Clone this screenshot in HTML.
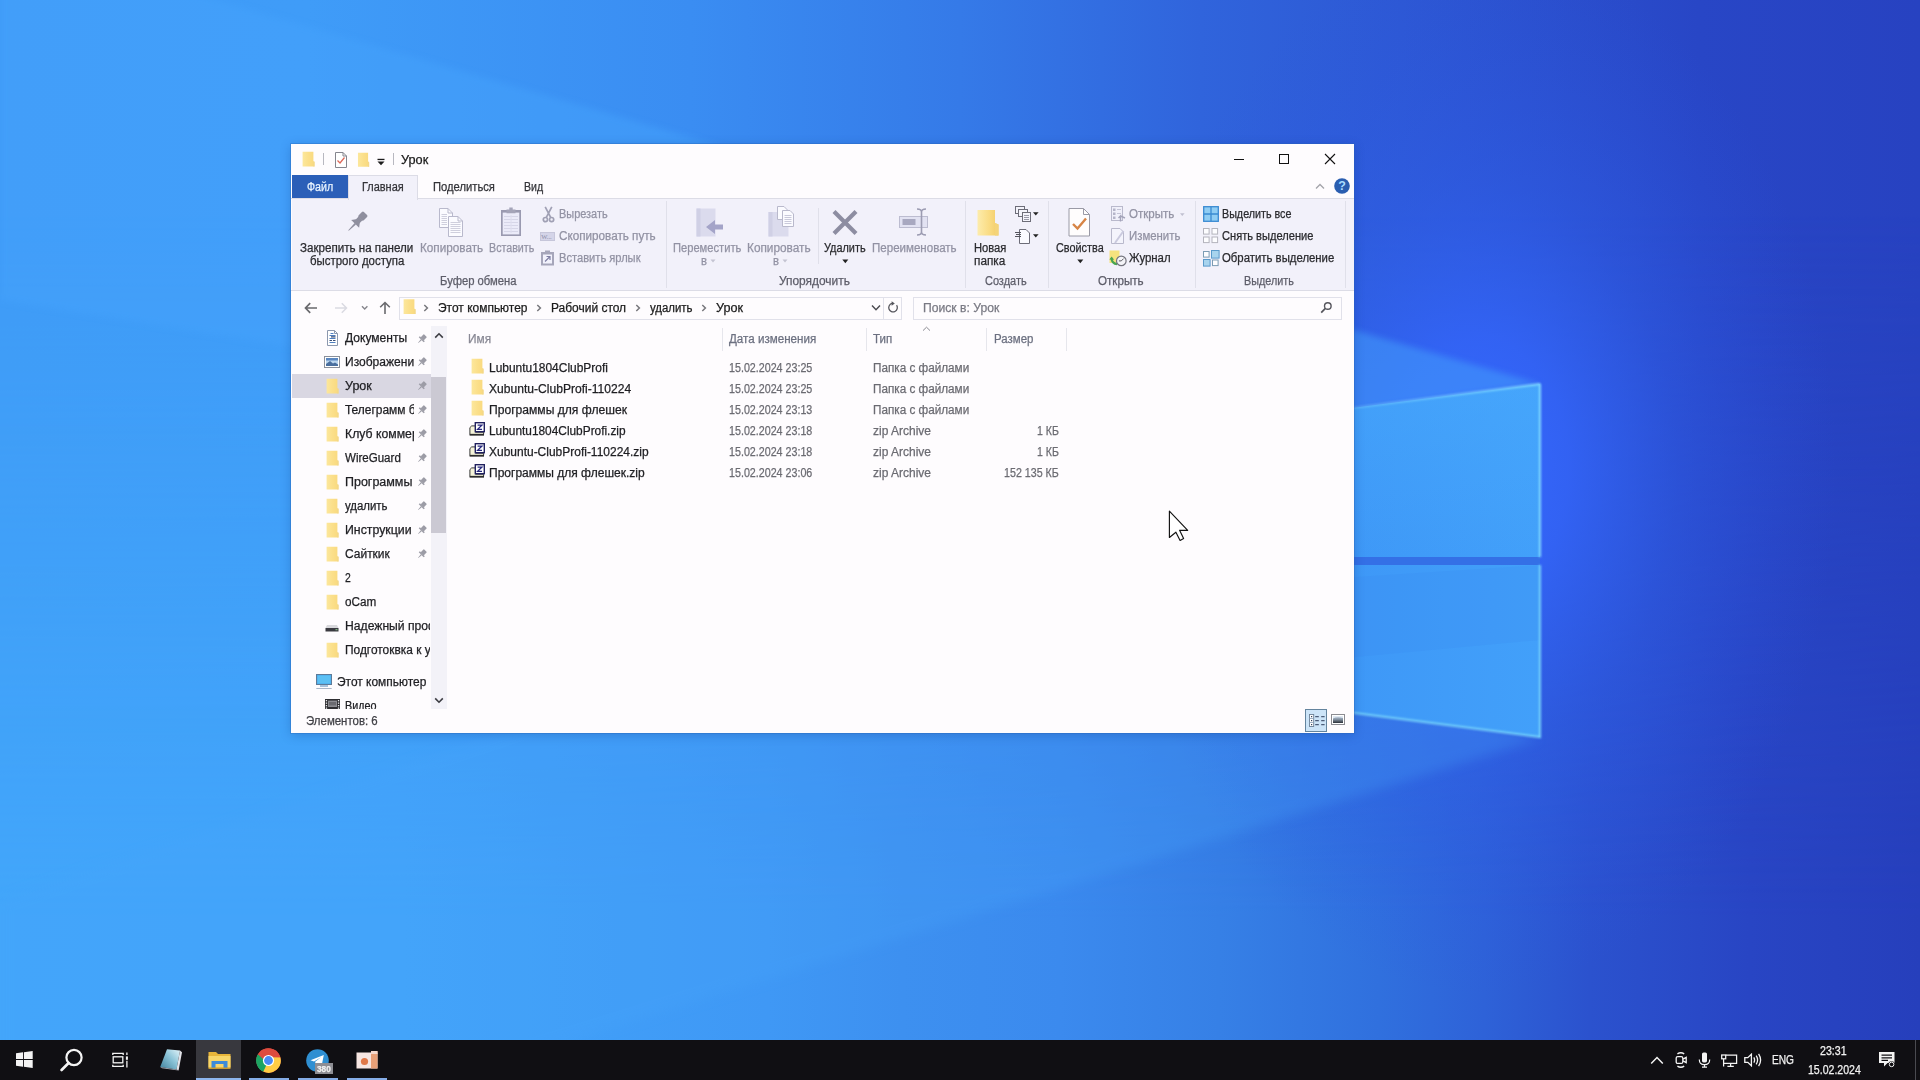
<!DOCTYPE html>
<html><head><meta charset="utf-8"><title>Урок</title>
<style>
html,body{margin:0;padding:0;width:1920px;height:1080px;overflow:hidden;background:#3f9bf7;font-family:"Liberation Sans",sans-serif;font-size:12px;color:#222}
.a{position:absolute}
.t{position:absolute;white-space:nowrap;transform-origin:0 0;letter-spacing:0;-webkit-text-stroke:0.25px}
#win{position:absolute;left:291px;top:144px;width:1063px;height:589px;background:#fefcfe;box-shadow:0 0 0 1px rgba(40,100,180,.32),0 2px 10px rgba(10,50,130,.27)}
#taskbar{position:absolute;left:0;top:1040px;width:1920px;height:40px;background:#100f13}
</style></head><body>


<svg id="wall" width="1920" height="1080" viewBox="0 0 1920 1080" style="position:absolute;left:0;top:0">
<defs>
<linearGradient id="base" x1="0" y1="0" x2="1920" y2="0" gradientUnits="userSpaceOnUse">
<stop offset="0" stop-color="#3f9bf7"/><stop offset="0.16" stop-color="#3f9cf8"/>
<stop offset="0.36" stop-color="#3a8df2"/><stop offset="0.5" stop-color="#357ae8"/>
<stop offset="0.625" stop-color="#3064dc"/><stop offset="0.73" stop-color="#2d58d4"/>
<stop offset="0.885" stop-color="#2846c6"/><stop offset="1" stop-color="#2742c1"/>
</linearGradient>
<linearGradient id="low" x1="0" y1="0" x2="1920" y2="0" gradientUnits="userSpaceOnUse">
<stop offset="0" stop-color="#42a6fa"/><stop offset="0.21" stop-color="#42a4fa"/>
<stop offset="0.4" stop-color="#3f98f5"/><stop offset="0.47" stop-color="#3d90f0"/>
<stop offset="0.552" stop-color="#3b8aee"/><stop offset="0.635" stop-color="#3680e6"/>
<stop offset="0.718" stop-color="#3070de"/><stop offset="0.773" stop-color="#2e62d8"/>
<stop offset="0.828" stop-color="#2b52ce"/><stop offset="0.911" stop-color="#2845c4"/>
<stop offset="1" stop-color="#263fbc"/>
</linearGradient>
<linearGradient id="lowmask" x1="0" y1="0" x2="0" y2="1080" gradientUnits="userSpaceOnUse">
<stop offset="0.2" stop-color="#000"/><stop offset="0.85" stop-color="#fff"/>
</linearGradient>
<mask id="mlow"><rect width="1920" height="1080" fill="url(#lowmask)"/></mask>
<radialGradient id="glow" cx="1480" cy="470" r="420" gradientUnits="userSpaceOnUse" gradientTransform="translate(1480 470) scale(0.85 1.25) translate(-1480 -470)">
<stop offset="0" stop-color="#3668ff" stop-opacity="1"/><stop offset="0.25" stop-color="#3466fc" stop-opacity="0.8"/><stop offset="0.55" stop-color="#3060ee" stop-opacity="0.4"/><stop offset="1" stop-color="#2d55e0" stop-opacity="0"/>
</radialGradient>
<linearGradient id="pane" x1="1000" y1="0" x2="1540" y2="0" gradientUnits="userSpaceOnUse">
<stop offset="0" stop-color="#398df3"/><stop offset="0.65" stop-color="#3e98f7"/><stop offset="1" stop-color="#42a0fa"/>
</linearGradient>
<linearGradient id="pv" x1="0" y1="384" x2="0" y2="557" gradientUnits="userSpaceOnUse"><stop offset="0" stop-color="#4cb0ff" stop-opacity="0.35"/><stop offset="1" stop-color="#4cb0ff" stop-opacity="0"/></linearGradient>
<linearGradient id="es" x1="1000" y1="0" x2="1540" y2="0" gradientUnits="userSpaceOnUse"><stop offset="0.5" stop-color="#84dcff" stop-opacity="0.15"/><stop offset="1" stop-color="#84dcff" stop-opacity="1"/></linearGradient>
<filter id="b6" filterUnits="userSpaceOnUse" x="0" y="0" width="1920" height="1080"><feGaussianBlur stdDeviation="6"/></filter>
<filter id="b3" filterUnits="userSpaceOnUse" x="0" y="0" width="1920" height="1080"><feGaussianBlur stdDeviation="3"/></filter>
<filter id="b2" filterUnits="userSpaceOnUse" x="0" y="0" width="1920" height="1080"><feGaussianBlur stdDeviation="1.2"/></filter>
</defs>
<rect width="1920" height="1080" fill="url(#base)"/>
<rect width="1920" height="1080" fill="url(#low)" mask="url(#mlow)"/>
<rect x="1000" y="0" width="920" height="1040" fill="url(#glow)"/>
<!-- ray wedge top-left of logo -->
<polygon points="1540,384 0,-63 0,300 1000,460" fill="#44a2fc" opacity="0.5" filter="url(#b3)"/>
<!-- ray below logo -->
<polygon points="1540,739 1354,690 600,700 0,900 0,1080 444,1080" fill="#46a4fa" opacity="0.28" filter="url(#b6)"/>
<!-- panes -->
<rect x="1000" y="556" width="540" height="10" fill="#3470e6"/>
<polygon points="1000,453 1540,384 1540,557 1000,557" fill="url(#pane)"/>
<polygon points="1000,453 1540,384 1540,557 1000,557" fill="url(#pv)"/>
<polygon points="1000,565 1540,565 1540,737 1000,667" fill="url(#pane)"/>
<polygon points="1000,600 1540,565 1540,640 1000,690" fill="#3585ee" opacity="0.16"/>
<polyline points="1000,453 1540,384" fill="none" stroke="url(#es)" stroke-width="2" filter="url(#b2)"/>
<polyline points="1540,384 1540,557" fill="none" stroke="#84dcff" stroke-width="2" filter="url(#b2)"/>
<polyline points="1540,565 1540,737 1000,667" fill="none" stroke="#78d4fb" stroke-width="2" filter="url(#b2)"/>
</svg>
<div id="win"></div>
<div class="a" style="left:292px;top:199px;width:1062px;height:91px;background:#f2f1fa"></div>
<div class="a" style="left:291px;top:198px;width:1063px;height:1px;background:#dcdce6"></div>
<div class="a" style="left:291px;top:290px;width:1063px;height:1px;background:#dcdce6"></div>
<div class="a" style="left:292px;top:175px;width:56px;height:23px;background:#2b5fb8"></div>
<div class="a" style="left:348px;top:175px;width:68px;height:24px;background:#f2f1fa;border:1px solid #dcdce6;border-bottom:none;box-sizing:content-box"></div>
<div class="a" style="left:666px;top:201px;width:1px;height:87px;background:#e0e0ea"></div>
<div class="a" style="left:965px;top:201px;width:1px;height:87px;background:#e0e0ea"></div>
<div class="a" style="left:1048px;top:201px;width:1px;height:87px;background:#e0e0ea"></div>
<div class="a" style="left:1195px;top:201px;width:1px;height:87px;background:#e0e0ea"></div>
<div class="a" style="left:1345px;top:201px;width:1px;height:87px;background:#e0e0ea"></div>
<div class="a" style="left:818px;top:208px;width:1px;height:56px;background:#e0e0ea"></div>
<svg class="a" style="left:344.8px;top:209.6px" width="24" height="24" viewBox="0 0 24 24" ><g transform="translate(12 12) rotate(45)" fill="#8f8f9e"><rect x="-3.6" y="-12" width="7.2" height="7.4" rx="1.4"/><rect x="-2.7" y="-5" width="5.4" height="4.4"/><path d="M-2.7 -1.2 H2.7 L5.6 2.6 H-5.6 Z"/><path d="M-1 2.4 H1 L0.35 12 H-0.35 Z"/></g></svg>
<svg class="a" style="left:439px;top:208px" width="25" height="29" viewBox="0 0 25 29" ><g fill="#fbfbff" stroke="#b9b9cc" stroke-width="1"><path d="M0.5 0.5 H9 L13.5 5 V19.5 H0.5 Z"/><path d="M9 0.5 V5 H13.5" fill="none"/><path d="M9.5 8.5 H19 L23.5 13 V28.5 H9.5 Z"/><path d="M19 8.5 V13 H23.5" fill="none"/></g><g stroke="#cfcfdd" stroke-width="1"><path d="M2.5 6.5H8M2.5 8.5H8M2.5 10.5H8M2.5 12.5H8M2.5 14.5H8M2.5 16.5H8"/><path d="M11.5 14.5H21.5M11.5 16.5H21.5M11.5 18.5H21.5M11.5 20.5H21.5M11.5 22.5H21.5M11.5 24.5H21.5"/></g></svg>
<svg class="a" style="left:500px;top:207px" width="22" height="30" viewBox="0 0 22 30" ><rect x="1" y="3" width="20" height="26" fill="#9a9ab0"/><rect x="2.7" y="5.6" width="16.6" height="21.8" fill="#ebebf9"/><path d="M6.5 2.5 H9.3 V0.5 H12.7 V2.5 H15.5 V6.2 H6.5 Z" fill="#a4a4b8"/><g stroke="#d6d6e8" stroke-width="1"><path d="M4 9.5H18M4 12.5H18M4 15.5H18M4 18.5H18M4 21.5H18M4 24.5H18"/><path d="M11 8V26" stroke="#dedeee"/></g></svg>
<svg class="a" style="left:542px;top:205.5px" width="13" height="17" viewBox="0 0 13 17" ><g fill="none" stroke="#a0a0b4" stroke-width="1.7"><path d="M3.2 0.8 L8.8 11.6 M9.8 0.8 L4.2 11.6"/><circle cx="3.4" cy="13.6" r="2.1"/><circle cx="9.6" cy="13.6" r="2.1"/></g></svg>
<svg class="a" style="left:540px;top:232px" width="15" height="9" viewBox="0 0 15 9" ><rect x="0.5" y="0.5" width="14" height="8" fill="#d4d4e8" stroke="#c6c6da"/><text x="1.3" y="7" font-size="6.5" font-family="Liberation Serif" fill="#8a8aa6">W...</text></svg>
<svg class="a" style="left:540px;top:250px" width="15" height="16" viewBox="0 0 15 16" ><rect x="1" y="2" width="13" height="13.5" fill="#a6a6ba"/><rect x="3" y="4.5" width="9" height="9" fill="#f2f2fc"/><rect x="5" y="0.5" width="5" height="3" fill="#a6a6ba"/><path d="M5 11.5 L9.5 7 M6.5 6.5 H10 V10" fill="none" stroke="#8080a4" stroke-width="1.2"/></svg>
<svg class="a" style="left:696px;top:208px" width="28" height="29" viewBox="0 0 28 29" ><rect x="0.5" y="0.5" width="19" height="28" fill="#dbdbed"/><rect x="0.5" y="0.5" width="4" height="28" fill="#d0d0e5"/><path d="M27 16.5 H19 V12 L10 19 L19 26 V21.5 H27 Z" fill="#a4a4c8"/></svg>
<svg class="a" style="left:768px;top:206px" width="27" height="31" viewBox="0 0 27 31" ><rect x="0.5" y="6" width="20" height="24.5" fill="#dbdbed"/><rect x="0.5" y="6" width="4" height="24.5" fill="#d0d0e5"/><g fill="#fbfbff" stroke="#b9b9cc"><path d="M9.5 0.5 H16 L19.5 4 V13.5 H9.5 Z"/><path d="M14.5 4.5 H22 L25.5 8 V20.5 H14.5 Z"/></g><g stroke="#c9c9da"><path d="M16.5 9.5H23.5M16.5 11.5H23.5M16.5 13.5H23.5M16.5 15.5H23.5M16.5 17.5H23.5"/></g></svg>
<svg class="a" style="left:709.5px;top:259px" width="6" height="4" viewBox="0 0 6 4" ><path d="M0.5 0.5 H5.5 L3 3.5 Z" fill="#c4c4d2"/></svg>
<svg class="a" style="left:781.5px;top:259px" width="6" height="4" viewBox="0 0 6 4" ><path d="M0.5 0.5 H5.5 L3 3.5 Z" fill="#c4c4d2"/></svg>
<svg class="a" style="left:831px;top:209px" width="28" height="27" viewBox="0 0 28 27" ><path d="M3 2.5 L25 24.5 M25 2.5 L3 24.5" stroke="#8d8da1" stroke-width="4.2"/></svg>
<svg class="a" style="left:841.5px;top:258.5px" width="7" height="5" viewBox="0 0 7 5" ><path d="M0.3 0.6 H6.3 L3.3 4.2 Z" fill="#222"/></svg>
<svg class="a" style="left:899px;top:208px" width="30" height="28" viewBox="0 0 30 28" ><rect x="0.5" y="8.5" width="28" height="11" fill="#e2e2f2" stroke="#bcbcd0"/><rect x="3.5" y="11" width="13" height="6" fill="#a8a8c0"/><g fill="none" stroke="#9c9cb2" stroke-width="1.6"><path d="M22.5 2 V26 M18 1 Q22.5 1 22.5 4 Q22.5 1 27 1 M18 27 Q22.5 27 22.5 24 Q22.5 27 27 27"/></g></svg>
<svg class="a" style="left:976px;top:208px" width="24" height="29" viewBox="0 0 24 29" style="filter:blur(.7px)"><defs><linearGradient id="nf" x1="0" y1="0" x2="1" y2="0"><stop offset="0" stop-color="#fdecac"/><stop offset="0.55" stop-color="#fadc84"/><stop offset="1" stop-color="#f2cc68"/></linearGradient></defs><path d="M1.5 2 H19 V15 L22.5 16.5 V27.5 H1.5 Z" fill="url(#nf)"/><path d="M19 15 L22.5 16.5 V27.5 H19 Z" fill="#f4d47a"/></svg>
<svg class="a" style="left:1015px;top:206px" width="17" height="16" viewBox="0 0 17 16" ><g fill="#f4f4fb" stroke="#6d6d78"><rect x="0.5" y="0.5" width="9" height="7"/><rect x="3.5" y="3.5" width="9" height="7"/><rect x="7.5" y="6.5" width="8" height="9"/></g><path d="M9 9.5H14M9 11.5H14M9 13.5H14" stroke="#9a9aa8"/></svg>
<svg class="a" style="left:1033px;top:211.5px" width="6" height="4" viewBox="0 0 6 4" ><path d="M0 0.3 H5.6 L2.8 3.6 Z" fill="#222"/></svg>
<svg class="a" style="left:1015px;top:228px" width="17" height="16" viewBox="0 0 17 16" ><path d="M4.5 1.5 H11 L14.5 5 V15.5 H4.5 Z" fill="#fbfbff" stroke="#6d6d78"/><path d="M0 4.5H6M1 6.5H6M0 8.5H6" stroke="#55555e"/></svg>
<svg class="a" style="left:1033px;top:233.5px" width="6" height="4" viewBox="0 0 6 4" ><path d="M0 0.3 H5.6 L2.8 3.6 Z" fill="#222"/></svg>
<svg class="a" style="left:1068px;top:208px" width="23" height="29" viewBox="0 0 23 29" ><path d="M1 0.5 H15.5 L21.5 6.5 V28 H1 Z" fill="#fffdfd" stroke="#9a9aa6"/><path d="M15.5 0.5 V6.5 H21.5" fill="none" stroke="#9a9aa6"/><path d="M5 16 L9.5 20.5 L18 10.5" fill="none" stroke="#d78445" stroke-width="2.4"/></svg>
<svg class="a" style="left:1076.5px;top:258.5px" width="7" height="5" viewBox="0 0 7 5" ><path d="M0.3 0.6 H6.3 L3.3 4.2 Z" fill="#222"/></svg>
<svg class="a" style="left:1111px;top:206px" width="15" height="16" viewBox="0 0 15 16" ><rect x="0.5" y="0.5" width="11" height="14" fill="#f0f0fa" stroke="#b9b9cc"/><g fill="#b4b4c8"><rect x="2" y="2.5" width="2.5" height="2.5"/><rect x="2" y="6.5" width="2.5" height="2.5"/><rect x="2" y="10.5" width="2.5" height="2.5"/></g><path d="M6 3.5H10M6 7.5H10" stroke="#c4c4d6"/><path d="M9.5 15.5 V10 L7.5 12 M9.5 10 L14 12" fill="none" stroke="#a4a4ba" stroke-width="1.4"/></svg>
<svg class="a" style="left:1180px;top:212.5px" width="5" height="3.5" viewBox="0 0 5 3.5" ><path d="M0 0.2 H4.6 L2.3 3 Z" fill="#c0c0d0"/></svg>
<svg class="a" style="left:1111px;top:228px" width="15" height="16" viewBox="0 0 15 16" ><path d="M0.5 0.5 H9 L12.5 4 V15.5 H0.5 Z" fill="#f4f4fc" stroke="#b9b9cc"/><path d="M12.5 3 L5 13.5 L4 15" fill="none" stroke="#cacade" stroke-width="2"/></svg>
<svg class="a" style="left:1109px;top:250px" width="18" height="17" viewBox="0 0 18 17" ><rect x="0.5" y="0.5" width="10" height="12.5" fill="#f5e27e"/><path d="M2.6 8.4 Q2.8 13.6 8.2 14.2" fill="none" stroke="#49a552" stroke-width="2.2"/><path d="M0.4 9.6 L2.6 6.4 L5.2 9.8 Z" fill="#49a552"/><circle cx="12.3" cy="10.9" r="4.8" fill="#f4f4f8" stroke="#74747e" stroke-width="1.2"/><path d="M12.3 10.9 L14.6 8.6 M12.3 10.9 H9.9" stroke="#5a5a62" stroke-width="1"/></svg>
<svg class="a" style="left:1203px;top:206.3px" width="16" height="16" viewBox="0 0 16 16" ><rect x="0.7" y="0.7" width="14.6" height="14.6" fill="#90cdf3" stroke="#3a8ad2" stroke-width="1.3"/><path d="M8 1 V15 M1 8 H15" stroke="#3a8ad2" stroke-width="1.3"/></svg>
<svg class="a" style="left:1203px;top:228px" width="16" height="16" viewBox="0 0 16 16" ><g fill="#fdfdff" stroke="#b4b4bd"><rect x="0.5" y="0.5" width="5.6" height="5.6"/><rect x="9" y="0.5" width="5.6" height="5.6"/><rect x="0.5" y="9" width="5.6" height="5.6"/><rect x="9" y="9" width="5.6" height="5.6"/></g></svg>
<svg class="a" style="left:1203px;top:250px" width="17" height="17" viewBox="0 0 17 17" ><g stroke="#7c9cb4"><rect x="0.5" y="1.5" width="5.6" height="5.6" fill="#fdfdff"/><rect x="8.5" y="0.5" width="7.6" height="7.6" fill="#a8d4ee" stroke="#5a9acb"/><rect x="0.5" y="9.5" width="6.6" height="6.6" fill="#a8d4ee" stroke="#5a9acb"/><rect x="9.5" y="10" width="5.6" height="5.6" fill="#fdfdff"/></g></svg>
<svg class="a" style="left:302px;top:151px" width="13" height="16" viewBox="0 0 13 16" ><defs><linearGradient id="fg" x1="0" y1="0" x2="1" y2="0"><stop offset="0" stop-color="#fce79c"/><stop offset="0.5" stop-color="#fbdf8a"/><stop offset="1" stop-color="#f9d97e"/></linearGradient></defs><path d="M0.6 0.8 H11.4 V10.2 L12.5 10.8 V15.6 H0.6 Z" fill="url(#fg)"/><path d="M11.4 10.2 L12.5 10.8 V15.6 H11.4 Z" fill="#f1d78c"/></svg>
<div class="a" style="left:323px;top:153px;width:1px;height:12px;background:#b8b8c0"></div>
<svg class="a" style="left:335px;top:152px" width="12" height="16" viewBox="0 0 12 16" ><path d="M0.5 0.5 H8 L11.5 4 V15.5 H0.5 Z" fill="#fff" stroke="#85858e"/><path d="M8 0.5 V4 H11.5" fill="none" stroke="#85858e"/><path d="M2.5 8.5 L5 11 L9.5 5.5" fill="none" stroke="#dd6658" stroke-width="1.25"/></svg>
<svg class="a" style="left:357px;top:152px" width="13" height="15" viewBox="0 0 13 16" ><defs><linearGradient id="fg" x1="0" y1="0" x2="1" y2="0"><stop offset="0" stop-color="#fce79c"/><stop offset="0.5" stop-color="#fbdf8a"/><stop offset="1" stop-color="#f9d97e"/></linearGradient></defs><path d="M0.6 0.8 H11.4 V10.2 L12.5 10.8 V15.6 H0.6 Z" fill="url(#fg)"/><path d="M11.4 10.2 L12.5 10.8 V15.6 H11.4 Z" fill="#f1d78c"/></svg>
<svg class="a" style="left:377px;top:157.7px" width="9" height="8" viewBox="0 0 9 8" ><rect x="0.5" y="0.8" width="7" height="1.3" fill="#1c1c1c"/><path d="M0.5 3.6 H7.5 L4 7.2 Z" fill="#1c1c1c"/></svg>
<div class="a" style="left:393px;top:153px;width:1px;height:12px;background:#b8b8c0"></div>
<div class="a" style="left:1234px;top:159px;width:10px;height:1px;background:#111"></div>
<div class="a" style="left:1279px;top:154px;width:8px;height:8px;border:1px solid #111"></div>
<svg class="a" style="left:1324px;top:153px" width="12" height="12" viewBox="0 0 12 12" ><path d="M1 1 L11 11 M11 1 L1 11" stroke="#111" stroke-width="1.1"/></svg>
<svg class="a" style="left:1315px;top:182px" width="10" height="8" viewBox="0 0 10 8" ><path d="M1 6.5 L5 2.5 L9 6.5" fill="none" stroke="#a4a4aa" stroke-width="1.3"/></svg>
<svg class="a" style="left:1334px;top:178px" width="16" height="16" viewBox="0 0 16 16" ><circle cx="8" cy="8" r="7.8" fill="#2a5eb0"/><text x="8" y="12.3" text-anchor="middle" font-family="Liberation Sans" font-weight="bold" font-size="12.5" fill="#a9dcff">?</text></svg>
<svg class="a" style="left:304px;top:302px" width="14" height="12" viewBox="0 0 14 12" ><path d="M13 6 H1.5 M6.2 1.2 L1.5 6 L6.2 10.8" fill="none" stroke="#68686c" stroke-width="1.7"/></svg>
<svg class="a" style="left:334px;top:302px" width="14" height="12" viewBox="0 0 14 12" ><path d="M1 6 H12.5 M7.8 1.2 L12.5 6 L7.8 10.8" fill="none" stroke="#dadae2" stroke-width="1.5"/></svg>
<svg class="a" style="left:361px;top:305px" width="8" height="6" viewBox="0 0 8 6" ><path d="M1 1.2 L3.7 3.9 L6.4 1.2" fill="none" stroke="#85858c" stroke-width="1.4"/></svg>
<svg class="a" style="left:379px;top:301px" width="12" height="14" viewBox="0 0 12 14" ><path d="M6 13 V1.5 M1.2 6.2 L6 1.5 L10.8 6.2" fill="none" stroke="#6a6a6e" stroke-width="1.6"/></svg>
<div class="a" style="left:399px;top:297px;width:501px;height:21px;border:1px solid #e1e1ea;background:#fefcfe"></div>
<div class="a" style="left:883px;top:298px;width:1px;height:21px;background:#e1e1ea"></div>
<svg class="a" style="left:403px;top:298px" width="13" height="17" viewBox="0 0 13 16" ><defs><linearGradient id="fg" x1="0" y1="0" x2="1" y2="0"><stop offset="0" stop-color="#fce79c"/><stop offset="0.5" stop-color="#fbdf8a"/><stop offset="1" stop-color="#f9d97e"/></linearGradient></defs><path d="M0.6 0.8 H11.4 V10.2 L12.5 10.8 V15.6 H0.6 Z" fill="url(#fg)"/><path d="M11.4 10.2 L12.5 10.8 V15.6 H11.4 Z" fill="#f1d78c"/></svg>
<svg class="a" style="left:423.2px;top:304px" width="6" height="8" viewBox="0 0 6 8" ><path d="M1.3 1 L4.4 4 L1.3 7" fill="none" stroke="#77777c" stroke-width="1.5"/></svg>
<svg class="a" style="left:536.4px;top:304px" width="6" height="8" viewBox="0 0 6 8" ><path d="M1.3 1 L4.4 4 L1.3 7" fill="none" stroke="#77777c" stroke-width="1.5"/></svg>
<svg class="a" style="left:635.1px;top:304px" width="6" height="8" viewBox="0 0 6 8" ><path d="M1.3 1 L4.4 4 L1.3 7" fill="none" stroke="#77777c" stroke-width="1.5"/></svg>
<svg class="a" style="left:701.1px;top:304px" width="6" height="8" viewBox="0 0 6 8" ><path d="M1.3 1 L4.4 4 L1.3 7" fill="none" stroke="#77777c" stroke-width="1.5"/></svg>
<svg class="a" style="left:871px;top:304px" width="10" height="8" viewBox="0 0 10 8" ><path d="M1 1.5 L5 5.8 L9 1.5" fill="none" stroke="#4a4a50" stroke-width="1.4"/></svg>
<svg class="a" style="left:887px;top:301px" width="12" height="13" viewBox="0 0 12 13" ><path d="M9.6 4.2 A4.3 4.3 0 1 1 5.2 2.4" fill="none" stroke="#55555c" stroke-width="1.3"/><path d="M4.6 0.2 L7.8 2.5 L4.6 4.8" fill="#55555c"/></svg>
<div class="a" style="left:913px;top:297px;width:427px;height:21px;border:1px solid #e1e1ea;background:#fefcfe"></div>
<svg class="a" style="left:1320px;top:301px" width="13" height="13" viewBox="0 0 13 13" ><circle cx="7.8" cy="5" r="3.3" fill="none" stroke="#55555c" stroke-width="1.4"/><path d="M5.4 7.4 L1.2 11.6" stroke="#55555c" stroke-width="1.7"/></svg>
<div class="a" style="left:292px;top:374px;width:139px;height:24px;background:#d9d7e2"></div>
<span class="t" style="left:345.2px;top:331.0px;font-size:12px;line-height:14px;color:#1e1e22;transform:scaleX(1.0055)">Документы</span>
<svg class="a" style="left:326px;top:330px" width="13" height="16" viewBox="0 0 13 16" ><path d="M1.5 0.5 H8.5 L11.5 3.5 V15.5 H1.5 Z" fill="#fff" stroke="#8c98ae" stroke-width="1"/><path d="M8.5 0.5 V3.5 H11.5" fill="none" stroke="#8c98ae" stroke-width="1"/><g stroke="#4f7fc0" stroke-width="1"><path d="M4.5 3.5H7.5M3.5 5.5H9.5M3.5 8.5H9.5M3.5 12.5H9.5"/></g><g stroke="#3a4e74" stroke-width="1.2"><path d="M5 6.9H9.5M3.5 10.5H6M7 10.5H9.5"/></g></svg>
<svg class="a" style="left:416px;top:334px" width="11" height="11" viewBox="0 0 11 11" ><g transform="rotate(45 5.5 5.5)" fill="#9c9ca6"><rect x="3.3" y="0" width="4.4" height="4.6" rx="0.6"/><rect x="2" y="4.3" width="7" height="1.6"/><path d="M4.9 5.8 H6.1 L5.7 10.2 H5.3 Z"/></g></svg>
<div class="a" style="left:340px;top:352.9px;width:74px;height:18px;overflow:hidden"><span class="t" style="left:5.2px;top:2px;font-size:12px;line-height:14px;color:#1e1e22;transform:scaleX(1.0030)">Изображения</span></div>
<svg class="a" style="left:324px;top:356px" width="16" height="12" viewBox="0 0 16 12" ><rect x="0.5" y="0.5" width="15" height="11" fill="#fff" stroke="#8a8f9a"/><rect x="2" y="2" width="12" height="8" fill="#bcd6ee"/><path d="M2 8 L6 5 L9 7.5 L11 6.5 L14 8.5 V10 H2 Z" fill="#4a6e9e"/><rect x="2" y="2" width="12" height="2.5" fill="#5a86c0"/></svg>
<svg class="a" style="left:416px;top:357px" width="11" height="11" viewBox="0 0 11 11" ><g transform="rotate(45 5.5 5.5)" fill="#9c9ca6"><rect x="3.3" y="0" width="4.4" height="4.6" rx="0.6"/><rect x="2" y="4.3" width="7" height="1.6"/><path d="M4.9 5.8 H6.1 L5.7 10.2 H5.3 Z"/></g></svg>
<span class="t" style="left:345.2px;top:378.8px;font-size:12px;line-height:14px;color:#1e1e22;transform:scaleX(1.0433)">Урок</span>
<svg class="a" style="left:326px;top:378px" width="13" height="16" viewBox="0 0 13 16" ><defs><linearGradient id="fg" x1="0" y1="0" x2="1" y2="0"><stop offset="0" stop-color="#fce79c"/><stop offset="0.5" stop-color="#fbdf8a"/><stop offset="1" stop-color="#f9d97e"/></linearGradient></defs><path d="M0.6 0.8 H11.4 V10.2 L12.5 10.8 V15.6 H0.6 Z" fill="url(#fg)"/><path d="M11.4 10.2 L12.5 10.8 V15.6 H11.4 Z" fill="#f1d78c"/></svg>
<svg class="a" style="left:416px;top:381px" width="11" height="11" viewBox="0 0 11 11" ><g transform="rotate(45 5.5 5.5)" fill="#9c9ca6"><rect x="3.3" y="0" width="4.4" height="4.6" rx="0.6"/><rect x="2" y="4.3" width="7" height="1.6"/><path d="M4.9 5.8 H6.1 L5.7 10.2 H5.3 Z"/></g></svg>
<div class="a" style="left:340px;top:400.7px;width:74px;height:18px;overflow:hidden"><span class="t" style="left:5.2px;top:2px;font-size:12px;line-height:14px;color:#1e1e22;transform:scaleX(0.9950)">Телеграмм бот</span></div>
<svg class="a" style="left:326px;top:402px" width="13" height="16" viewBox="0 0 13 16" ><defs><linearGradient id="fg" x1="0" y1="0" x2="1" y2="0"><stop offset="0" stop-color="#fce79c"/><stop offset="0.5" stop-color="#fbdf8a"/><stop offset="1" stop-color="#f9d97e"/></linearGradient></defs><path d="M0.6 0.8 H11.4 V10.2 L12.5 10.8 V15.6 H0.6 Z" fill="url(#fg)"/><path d="M11.4 10.2 L12.5 10.8 V15.6 H11.4 Z" fill="#f1d78c"/></svg>
<svg class="a" style="left:416px;top:405px" width="11" height="11" viewBox="0 0 11 11" ><g transform="rotate(45 5.5 5.5)" fill="#9c9ca6"><rect x="3.3" y="0" width="4.4" height="4.6" rx="0.6"/><rect x="2" y="4.3" width="7" height="1.6"/><path d="M4.9 5.8 H6.1 L5.7 10.2 H5.3 Z"/></g></svg>
<div class="a" style="left:340px;top:424.7px;width:74px;height:18px;overflow:hidden"><span class="t" style="left:5.2px;top:2px;font-size:12px;line-height:14px;color:#1e1e22;transform:scaleX(1.0200)">Клуб коммерсант</span></div>
<svg class="a" style="left:326px;top:426px" width="13" height="16" viewBox="0 0 13 16" ><defs><linearGradient id="fg" x1="0" y1="0" x2="1" y2="0"><stop offset="0" stop-color="#fce79c"/><stop offset="0.5" stop-color="#fbdf8a"/><stop offset="1" stop-color="#f9d97e"/></linearGradient></defs><path d="M0.6 0.8 H11.4 V10.2 L12.5 10.8 V15.6 H0.6 Z" fill="url(#fg)"/><path d="M11.4 10.2 L12.5 10.8 V15.6 H11.4 Z" fill="#f1d78c"/></svg>
<svg class="a" style="left:416px;top:429px" width="11" height="11" viewBox="0 0 11 11" ><g transform="rotate(45 5.5 5.5)" fill="#9c9ca6"><rect x="3.3" y="0" width="4.4" height="4.6" rx="0.6"/><rect x="2" y="4.3" width="7" height="1.6"/><path d="M4.9 5.8 H6.1 L5.7 10.2 H5.3 Z"/></g></svg>
<span class="t" style="left:345.2px;top:450.7px;font-size:12px;line-height:14px;color:#1e1e22;transform:scaleX(0.9618)">WireGuard</span>
<svg class="a" style="left:326px;top:450px" width="13" height="16" viewBox="0 0 13 16" ><defs><linearGradient id="fg" x1="0" y1="0" x2="1" y2="0"><stop offset="0" stop-color="#fce79c"/><stop offset="0.5" stop-color="#fbdf8a"/><stop offset="1" stop-color="#f9d97e"/></linearGradient></defs><path d="M0.6 0.8 H11.4 V10.2 L12.5 10.8 V15.6 H0.6 Z" fill="url(#fg)"/><path d="M11.4 10.2 L12.5 10.8 V15.6 H11.4 Z" fill="#f1d78c"/></svg>
<svg class="a" style="left:416px;top:453px" width="11" height="11" viewBox="0 0 11 11" ><g transform="rotate(45 5.5 5.5)" fill="#9c9ca6"><rect x="3.3" y="0" width="4.4" height="4.6" rx="0.6"/><rect x="2" y="4.3" width="7" height="1.6"/><path d="M4.9 5.8 H6.1 L5.7 10.2 H5.3 Z"/></g></svg>
<span class="t" style="left:345.2px;top:474.7px;font-size:12px;line-height:14px;color:#1e1e22;transform:scaleX(1.0397)">Программы</span>
<svg class="a" style="left:326px;top:474px" width="13" height="16" viewBox="0 0 13 16" ><defs><linearGradient id="fg" x1="0" y1="0" x2="1" y2="0"><stop offset="0" stop-color="#fce79c"/><stop offset="0.5" stop-color="#fbdf8a"/><stop offset="1" stop-color="#f9d97e"/></linearGradient></defs><path d="M0.6 0.8 H11.4 V10.2 L12.5 10.8 V15.6 H0.6 Z" fill="url(#fg)"/><path d="M11.4 10.2 L12.5 10.8 V15.6 H11.4 Z" fill="#f1d78c"/></svg>
<svg class="a" style="left:416px;top:477px" width="11" height="11" viewBox="0 0 11 11" ><g transform="rotate(45 5.5 5.5)" fill="#9c9ca6"><rect x="3.3" y="0" width="4.4" height="4.6" rx="0.6"/><rect x="2" y="4.3" width="7" height="1.6"/><path d="M4.9 5.8 H6.1 L5.7 10.2 H5.3 Z"/></g></svg>
<span class="t" style="left:345.2px;top:498.7px;font-size:12px;line-height:14px;color:#1e1e22;transform:scaleX(0.9501)">удалить</span>
<svg class="a" style="left:326px;top:498px" width="13" height="16" viewBox="0 0 13 16" ><defs><linearGradient id="fg" x1="0" y1="0" x2="1" y2="0"><stop offset="0" stop-color="#fce79c"/><stop offset="0.5" stop-color="#fbdf8a"/><stop offset="1" stop-color="#f9d97e"/></linearGradient></defs><path d="M0.6 0.8 H11.4 V10.2 L12.5 10.8 V15.6 H0.6 Z" fill="url(#fg)"/><path d="M11.4 10.2 L12.5 10.8 V15.6 H11.4 Z" fill="#f1d78c"/></svg>
<svg class="a" style="left:416px;top:501px" width="11" height="11" viewBox="0 0 11 11" ><g transform="rotate(45 5.5 5.5)" fill="#9c9ca6"><rect x="3.3" y="0" width="4.4" height="4.6" rx="0.6"/><rect x="2" y="4.3" width="7" height="1.6"/><path d="M4.9 5.8 H6.1 L5.7 10.2 H5.3 Z"/></g></svg>
<span class="t" style="left:345.2px;top:522.6px;font-size:12px;line-height:14px;color:#1e1e22;transform:scaleX(1.0273)">Инструкции</span>
<svg class="a" style="left:326px;top:522px" width="13" height="16" viewBox="0 0 13 16" ><defs><linearGradient id="fg" x1="0" y1="0" x2="1" y2="0"><stop offset="0" stop-color="#fce79c"/><stop offset="0.5" stop-color="#fbdf8a"/><stop offset="1" stop-color="#f9d97e"/></linearGradient></defs><path d="M0.6 0.8 H11.4 V10.2 L12.5 10.8 V15.6 H0.6 Z" fill="url(#fg)"/><path d="M11.4 10.2 L12.5 10.8 V15.6 H11.4 Z" fill="#f1d78c"/></svg>
<svg class="a" style="left:416px;top:525px" width="11" height="11" viewBox="0 0 11 11" ><g transform="rotate(45 5.5 5.5)" fill="#9c9ca6"><rect x="3.3" y="0" width="4.4" height="4.6" rx="0.6"/><rect x="2" y="4.3" width="7" height="1.6"/><path d="M4.9 5.8 H6.1 L5.7 10.2 H5.3 Z"/></g></svg>
<span class="t" style="left:345.2px;top:546.5px;font-size:12px;line-height:14px;color:#1e1e22;transform:scaleX(0.9980)">Сайткик</span>
<svg class="a" style="left:326px;top:546px" width="13" height="16" viewBox="0 0 13 16" ><defs><linearGradient id="fg" x1="0" y1="0" x2="1" y2="0"><stop offset="0" stop-color="#fce79c"/><stop offset="0.5" stop-color="#fbdf8a"/><stop offset="1" stop-color="#f9d97e"/></linearGradient></defs><path d="M0.6 0.8 H11.4 V10.2 L12.5 10.8 V15.6 H0.6 Z" fill="url(#fg)"/><path d="M11.4 10.2 L12.5 10.8 V15.6 H11.4 Z" fill="#f1d78c"/></svg>
<svg class="a" style="left:416px;top:549px" width="11" height="11" viewBox="0 0 11 11" ><g transform="rotate(45 5.5 5.5)" fill="#9c9ca6"><rect x="3.3" y="0" width="4.4" height="4.6" rx="0.6"/><rect x="2" y="4.3" width="7" height="1.6"/><path d="M4.9 5.8 H6.1 L5.7 10.2 H5.3 Z"/></g></svg>
<span class="t" style="left:345.2px;top:571.1px;font-size:12px;line-height:14px;color:#1e1e22;transform:scaleX(0.8673)">2</span>
<svg class="a" style="left:326px;top:570px" width="13" height="16" viewBox="0 0 13 16" ><defs><linearGradient id="fg" x1="0" y1="0" x2="1" y2="0"><stop offset="0" stop-color="#fce79c"/><stop offset="0.5" stop-color="#fbdf8a"/><stop offset="1" stop-color="#f9d97e"/></linearGradient></defs><path d="M0.6 0.8 H11.4 V10.2 L12.5 10.8 V15.6 H0.6 Z" fill="url(#fg)"/><path d="M11.4 10.2 L12.5 10.8 V15.6 H11.4 Z" fill="#f1d78c"/></svg>
<span class="t" style="left:345.2px;top:595.0px;font-size:12px;line-height:14px;color:#1e1e22;transform:scaleX(0.9776)">oCam</span>
<svg class="a" style="left:326px;top:594px" width="13" height="16" viewBox="0 0 13 16" ><defs><linearGradient id="fg" x1="0" y1="0" x2="1" y2="0"><stop offset="0" stop-color="#fce79c"/><stop offset="0.5" stop-color="#fbdf8a"/><stop offset="1" stop-color="#f9d97e"/></linearGradient></defs><path d="M0.6 0.8 H11.4 V10.2 L12.5 10.8 V15.6 H0.6 Z" fill="url(#fg)"/><path d="M11.4 10.2 L12.5 10.8 V15.6 H11.4 Z" fill="#f1d78c"/></svg>
<div class="a" style="left:340px;top:616.7px;width:90px;height:18px;overflow:hidden"><span class="t" style="left:5.2px;top:2px;font-size:12px;line-height:14px;color:#1e1e22;transform:scaleX(1.0130)">Надежный проф</span></div>
<svg class="a" style="left:325px;top:623px" width="14" height="9" viewBox="0 0 14 9" ><path d="M2 2 H12 L13.5 5 H0.5 Z" fill="#d8d8dc"/><rect x="0.5" y="5" width="13" height="3.5" fill="#3a3a40"/><rect x="10.5" y="6.2" width="2" height="1" fill="#8fd08f"/></svg>
<div class="a" style="left:340px;top:640.7px;width:90px;height:18px;overflow:hidden"><span class="t" style="left:5.2px;top:2px;font-size:12px;line-height:14px;color:#1e1e22;transform:scaleX(0.9920)">Подготоквка к уроку</span></div>
<svg class="a" style="left:326px;top:642px" width="13" height="16" viewBox="0 0 13 16" ><defs><linearGradient id="fg" x1="0" y1="0" x2="1" y2="0"><stop offset="0" stop-color="#fce79c"/><stop offset="0.5" stop-color="#fbdf8a"/><stop offset="1" stop-color="#f9d97e"/></linearGradient></defs><path d="M0.6 0.8 H11.4 V10.2 L12.5 10.8 V15.6 H0.6 Z" fill="url(#fg)"/><path d="M11.4 10.2 L12.5 10.8 V15.6 H11.4 Z" fill="#f1d78c"/></svg>
<svg class="a" style="left:316px;top:674px" width="16" height="15" viewBox="0 0 16 15" ><rect x="0.5" y="0.5" width="15" height="10" fill="#4aa8ea" stroke="#5e7a98"/><rect x="1.5" y="1.5" width="13" height="8" fill="#5cc0f4"/><rect x="4" y="11.4" width="8" height="1.2" fill="#6f9cc4"/><rect x="0.3" y="14" width="15.4" height="1" fill="#aab6c8"/></svg>
<div class="a" style="left:320px;top:696px;width:110px;height:13px;overflow:hidden"><svg class="a" style="left:5px;top:3px" width="15" height="10" viewBox="0 0 15 10" ><rect x="0" y="0" width="15" height="10" fill="#2e2e32"/><rect x="3" y="1.6" width="9" height="6.4" fill="#8c8c92"/><rect x="4" y="3" width="7" height="3.4" fill="#6a6a70"/><g fill="#e8e8ec"><rect x="0.8" y="1" width="1.3" height="1.3"/><rect x="0.8" y="3.5" width="1.3" height="1.3"/><rect x="0.8" y="6" width="1.3" height="1.3"/><rect x="0.8" y="8.5" width="1.3" height="1.3"/><rect x="12.9" y="1" width="1.3" height="1.3"/><rect x="12.9" y="3.5" width="1.3" height="1.3"/><rect x="12.9" y="6" width="1.3" height="1.3"/><rect x="12.9" y="8.5" width="1.3" height="1.3"/></g></svg><span class="t" style="left:25px;top:3px;font-size:12px;line-height:14px;color:#1e1e22;transform:scaleX(.9)">Видео</span></div>
<div class="a" style="left:431px;top:326px;width:16px;height:383px;background:#f3f2f8"></div>
<div class="a" style="left:431px;top:377px;width:15px;height:156px;background:#cbc9d3"></div>
<svg class="a" style="left:434px;top:332px" width="10" height="7" viewBox="0 0 10 7" ><path d="M1.2 5.6 L5 1.8 L8.8 5.6" fill="none" stroke="#3c3c42" stroke-width="1.6"/></svg>
<svg class="a" style="left:434px;top:697px" width="10" height="7" viewBox="0 0 10 7" ><path d="M1.2 1.4 L5 5.2 L8.8 1.4" fill="none" stroke="#3c3c42" stroke-width="1.6"/></svg>
<div class="a" style="left:722px;top:328px;width:1px;height:23px;background:#e6e6ec"></div>
<div class="a" style="left:866px;top:328px;width:1px;height:23px;background:#e6e6ec"></div>
<div class="a" style="left:986px;top:328px;width:1px;height:23px;background:#e6e6ec"></div>
<div class="a" style="left:1066px;top:328px;width:1px;height:23px;background:#e6e6ec"></div>
<svg class="a" style="left:922px;top:326px" width="9" height="6" viewBox="0 0 9 6" ><path d="M1 4.6 L4.5 1.2 L8 4.6" fill="none" stroke="#8a8a92" stroke-width="1"/></svg>
<svg class="a" style="left:470.5px;top:358px" width="13" height="16" viewBox="0 0 13 16" ><defs><linearGradient id="fg" x1="0" y1="0" x2="1" y2="0"><stop offset="0" stop-color="#fce79c"/><stop offset="0.5" stop-color="#fbdf8a"/><stop offset="1" stop-color="#f9d97e"/></linearGradient></defs><path d="M0.6 0.8 H11.4 V10.2 L12.5 10.8 V15.6 H0.6 Z" fill="url(#fg)"/><path d="M11.4 10.2 L12.5 10.8 V15.6 H11.4 Z" fill="#f1d78c"/></svg>
<svg class="a" style="left:470.5px;top:379px" width="13" height="16" viewBox="0 0 13 16" ><defs><linearGradient id="fg" x1="0" y1="0" x2="1" y2="0"><stop offset="0" stop-color="#fce79c"/><stop offset="0.5" stop-color="#fbdf8a"/><stop offset="1" stop-color="#f9d97e"/></linearGradient></defs><path d="M0.6 0.8 H11.4 V10.2 L12.5 10.8 V15.6 H0.6 Z" fill="url(#fg)"/><path d="M11.4 10.2 L12.5 10.8 V15.6 H11.4 Z" fill="#f1d78c"/></svg>
<svg class="a" style="left:470.5px;top:400px" width="13" height="16" viewBox="0 0 13 16" ><defs><linearGradient id="fg" x1="0" y1="0" x2="1" y2="0"><stop offset="0" stop-color="#fce79c"/><stop offset="0.5" stop-color="#fbdf8a"/><stop offset="1" stop-color="#f9d97e"/></linearGradient></defs><path d="M0.6 0.8 H11.4 V10.2 L12.5 10.8 V15.6 H0.6 Z" fill="url(#fg)"/><path d="M11.4 10.2 L12.5 10.8 V15.6 H11.4 Z" fill="#f1d78c"/></svg>
<svg class="a" style="left:469.3px;top:422px" width="16" height="15" viewBox="0 0 16 15" ><path d="M0.9 12.4 V5.6 L2.7 3.9 H6.5 V10.2 H14.6 V12.4 Z" fill="#f6f4da" stroke="#3a3a3a" stroke-width="1"/><path d="M0.6 12.8 H15" stroke="#2c2c2c" stroke-width="1.7"/><rect x="6.3" y="0.7" width="9" height="9" fill="#fff" stroke="#20205e" stroke-width="1.4"/><path d="M8.6 3 H13 L8.6 7.4 H13" fill="none" stroke="#26267e" stroke-width="1.25"/></svg>
<svg class="a" style="left:469.3px;top:443px" width="16" height="15" viewBox="0 0 16 15" ><path d="M0.9 12.4 V5.6 L2.7 3.9 H6.5 V10.2 H14.6 V12.4 Z" fill="#f6f4da" stroke="#3a3a3a" stroke-width="1"/><path d="M0.6 12.8 H15" stroke="#2c2c2c" stroke-width="1.7"/><rect x="6.3" y="0.7" width="9" height="9" fill="#fff" stroke="#20205e" stroke-width="1.4"/><path d="M8.6 3 H13 L8.6 7.4 H13" fill="none" stroke="#26267e" stroke-width="1.25"/></svg>
<svg class="a" style="left:469.3px;top:464px" width="16" height="15" viewBox="0 0 16 15" ><path d="M0.9 12.4 V5.6 L2.7 3.9 H6.5 V10.2 H14.6 V12.4 Z" fill="#f6f4da" stroke="#3a3a3a" stroke-width="1"/><path d="M0.6 12.8 H15" stroke="#2c2c2c" stroke-width="1.7"/><rect x="6.3" y="0.7" width="9" height="9" fill="#fff" stroke="#20205e" stroke-width="1.4"/><path d="M8.6 3 H13 L8.6 7.4 H13" fill="none" stroke="#26267e" stroke-width="1.25"/></svg>
<div class="a" style="left:1305px;top:709px;width:22px;height:23px;background:#cce4f8;border:1px solid #64849e;box-sizing:border-box"></div>
<svg class="a" style="left:1309px;top:714px" width="16" height="13" viewBox="0 0 16 13" ><rect x="0.5" y="0.5" width="4.2" height="12" fill="#fff" stroke="#6a7f96" stroke-width="0.9"/><g fill="#35425a"><rect x="2" y="2" width="1.2" height="1.2"/><rect x="2" y="6" width="1.2" height="1.2"/><rect x="2" y="10" width="1.2" height="1.2"/></g><path d="M0.5 4.5H4.7M0.5 8.5H4.7" stroke="#8aa0b8" stroke-width="0.8"/><g stroke="#4c5c78" stroke-width="1.2"><path d="M6.2 2.6H9.8M12.2 2.6H15.6M6.2 6.6H9.8M12.2 6.6H15.6M6.2 10.6H9.8M12.2 10.6H15.6"/></g></svg>
<svg class="a" style="left:1331px;top:714px" width="14" height="11" viewBox="0 0 14 11" ><defs><linearGradient id="th" x1="0" y1="0" x2="0" y2="1"><stop offset="0" stop-color="#b8c8dc"/><stop offset="0.45" stop-color="#8a98a8"/><stop offset="1" stop-color="#2a3038"/></linearGradient></defs><rect x="0.5" y="0.5" width="13" height="10" fill="#fff" stroke="#8c8c92"/><rect x="2" y="2" width="10" height="7" fill="url(#th)"/><path d="M2 4.5 Q6 2.2 12 4 V2 H2 Z" fill="#dfe8f2"/></svg>
<div id="taskbar"></div>
<div class="a" style="left:196px;top:1040px;width:45px;height:40px;background:#38383e"></div>
<div class="a" style="left:196px;top:1078px;width:45px;height:2px;background:#8db6ee"></div>
<div class="a" style="left:249px;top:1078px;width:40px;height:2px;background:#84ace6"></div>
<div class="a" style="left:298px;top:1078px;width:40px;height:2px;background:#84ace6"></div>
<div class="a" style="left:347px;top:1078px;width:40px;height:2px;background:#84ace6"></div>
<svg class="a" style="left:15.6px;top:1051.4px" width="17" height="17" viewBox="0 0 17 17" ><path d="M0 2.3 L7 1.3 V8.1 H0 Z M7.9 1.2 L16.7 0 V8.1 H7.9 Z M0 8.9 H7 V15.7 L0 14.7 Z M7.9 8.9 H16.7 V17 L7.9 15.8 Z" fill="#f4f4f4"/></svg>
<svg class="a" style="left:60px;top:1048px" width="24" height="24" viewBox="0 0 24 24" ><circle cx="14" cy="9.5" r="7.6" fill="none" stroke="#f4f4f4" stroke-width="2.2"/><path d="M8.6 15 L1.6 22" stroke="#f4f4f4" stroke-width="2.6" stroke-linecap="round"/></svg>
<svg class="a" style="left:111.5px;top:1051.5px" width="17" height="16" viewBox="0 0 17 16" ><g fill="none" stroke="#f4f4f4" stroke-width="1.3"><rect x="1.2" y="4.8" width="9.6" height="6"/><path d="M0.8 3 V1.4 H11.2 V3 M0.8 12.8 V14.4 H11.2 V12.8"/><path d="M14.9 0.4 V3 M14.9 8.8 V15.4"/></g><rect x="13.9" y="4.4" width="2" height="3.4" fill="#f4f4f4"/></svg>
<svg class="a" style="left:159px;top:1048px" width="24" height="23" viewBox="0 0 24 23" style="filter:blur(.35px)"><defs><linearGradient id="np" x1="1" y1="0" x2="0" y2="1"><stop offset="0" stop-color="#e4f4fa"/><stop offset="0.45" stop-color="#8cc4d8"/><stop offset="1" stop-color="#3f7f9a"/></linearGradient></defs><path d="M8 1.2 L21 2.6 L17.5 21.5 L1.2 19 Z" fill="url(#np)"/><path d="M21 2.6 L23 4.2 L19.6 22.4 L17.5 21.5 Z" fill="#e2e2e8"/><path d="M1.2 19 L17.5 21.5 L19.6 22.4 L3 20.2 Z" fill="#a8a8b2"/></svg>
<svg class="a" style="left:208px;top:1050px" width="23" height="20" viewBox="0 0 23 20" ><path d="M0.5 2 H8 L10 4 H22.5 V17 H0.5 Z" fill="#e8b53a"/><rect x="0.5" y="6" width="22" height="12" fill="#f8d66a"/><rect x="3.5" y="11" width="16" height="7.5" fill="#3d8bd8"/><rect x="7.5" y="14" width="8" height="4.5" fill="#f8d66a"/><rect x="0.5" y="17.5" width="22" height="1.5" fill="#c99a2e"/></svg>
<svg class="a" style="left:256px;top:1047.5px" width="25" height="25" viewBox="0 0 25 25" ><circle cx="12.5" cy="12.5" r="12.2" fill="#dd4b3e"/><path d="M12.5 12.5 L1.9 6.4 A12.2 12.2 0 0 0 7.6 23.7 L12.5 12.5 Z" fill="#1da462"/><path d="M1.9 6.4 A12.2 12.2 0 0 0 7.3 23.5 L13 14 Z" fill="#1da462"/><path d="M12.5 12.5 L7.4 23.6 A12.2 12.2 0 0 0 24.3 9.2 L12.5 9 Z" fill="#ffcd46"/><path d="M2 6.3 A12.2 12.2 0 0 1 24.3 9.3 L12.5 9.3 L7 11 Z" fill="#dd4b3e"/><circle cx="12.5" cy="12.5" r="5.6" fill="#fff"/><circle cx="12.5" cy="12.5" r="4.4" fill="#4a8af4"/></svg>
<svg class="a" style="left:306px;top:1048.5px" width="23" height="23" viewBox="0 0 23 23" ><circle cx="11.5" cy="11.5" r="11.3" fill="#2f8fd2"/><path d="M4.5 11.3 L17.8 6 L15.6 17 L11.6 14 L9.6 16 L9.2 12.8 L15 8.2 L8 12.4 Z" fill="#fff"/></svg>
<div class="a" style="left:315px;top:1063px;width:18px;height:11px;background:#8e8e94"></div><span class="t" style="left:316.5px;top:1063.5px;font-size:9px;line-height:10px;font-weight:bold;color:#f0f0f0;transform:scaleX(.92)">380</span>
<svg class="a" style="left:356px;top:1051px" width="22" height="18" viewBox="0 0 22 18" ><rect x="0.5" y="1.5" width="21" height="16" fill="#f6e6e2"/><rect x="15" y="0" width="6.5" height="17.5" fill="#e8a078"/><rect x="15" y="0" width="6.5" height="3" fill="#f4d8cc"/><circle cx="8.5" cy="10.5" r="3.6" fill="#e07848"/></svg>
<svg class="a" style="left:1650px;top:1055px" width="14" height="10" viewBox="0 0 14 10" ><path d="M1.2 8.6 L7 2.6 L12.8 8.6" fill="none" stroke="#f4f4f4" stroke-width="1.5"/></svg>
<svg class="a" style="left:1674px;top:1051px" width="14" height="18" viewBox="0 0 14 18" ><g fill="none" stroke="#f4f4f4" stroke-width="1.3"><rect x="2.2" y="5.6" width="6.6" height="6.8" rx="1.5"/><path d="M9 8.1 L12.2 6.4 V11.6 L9 9.9"/><path d="M3.4 2.9 Q6.8 0.6 10.2 2.9 M3.4 15.1 Q6.8 17.4 10.2 15.1"/></g></svg>
<svg class="a" style="left:1698px;top:1052px" width="13" height="16" viewBox="0 0 13 16" ><rect x="4" y="0.4" width="5" height="10" rx="1.6" fill="#f4f4f4"/><path d="M1.3 7.4 Q1.3 12.6 6.5 12.6 Q11.7 12.6 11.7 7.4 M6.5 12.6 V15 M4 15.2 H9" fill="none" stroke="#f4f4f4" stroke-width="1.2"/></svg>
<svg class="a" style="left:1721px;top:1054px" width="17" height="14" viewBox="0 0 17 14" ><g fill="none" stroke="#f4f4f4" stroke-width="1.25"><path d="M4.8 1 H15.6 V9.4 H2.6"/><rect x="0.7" y="1" width="4" height="3.8"/><path d="M2.6 4.8 V12.4 M9.6 9.4 V12.2 M6.4 12.4 H12.8"/></g></svg>
<svg class="a" style="left:1744px;top:1053px" width="18" height="14" viewBox="0 0 18 14" ><g fill="none" stroke="#f4f4f4" stroke-width="1.3"><path d="M0.8 4.6 H3.8 L7.4 1.2 V12.8 L3.8 9.4 H0.8 Z"/><path d="M9.8 4.4 Q11.4 7 9.8 9.6 M12.2 2.6 Q15 7 12.2 11.4 M14.6 0.8 Q18.6 7 14.6 13.2"/></g></svg>
<svg class="a" style="left:1878px;top:1051px" width="18" height="18" viewBox="0 0 18 18" ><path d="M1 1 H16.5 V12 H9.5 L6 15.5 V12 H1 Z" fill="#f4f4f4"/><g stroke="#100f13" stroke-width="1.2"><path d="M3.5 4.2H14M3.5 6.8H14M3.5 9.4H10"/></g><circle cx="13.6" cy="13.4" r="3.2" fill="#100f13"/><circle cx="13.6" cy="13.4" r="2.3" fill="none" stroke="#f4f4f4" stroke-width="1"/></svg>
<div class="a" style="left:1915px;top:1040px;width:1px;height:40px;background:#4a4a50"></div>
<span class="t" style="left:401.0px;top:153.2px;font-size:12px;line-height:14px;color:#1c1c1c;transform:scaleX(1.0589)">Урок</span>
<span class="t" style="left:306.7px;top:179.7px;font-size:12px;line-height:14px;color:#e9f4ff;transform:scaleX(0.8877)">Файл</span>
<span class="t" style="left:362.1px;top:179.7px;font-size:12px;line-height:14px;color:#333338;transform:scaleX(0.9127)">Главная</span>
<span class="t" style="left:433.3px;top:179.7px;font-size:12px;line-height:14px;color:#333338;transform:scaleX(0.9341)">Поделиться</span>
<span class="t" style="left:524.1px;top:179.7px;font-size:12px;line-height:14px;color:#333338;transform:scaleX(0.8794)">Вид</span>
<span class="t" style="left:300.3px;top:240.9px;font-size:12px;line-height:14px;color:#2a2a2e;transform:scaleX(0.9666)">Закрепить на панели</span>
<span class="t" style="left:309.5px;top:254.0px;font-size:12px;line-height:14px;color:#2a2a2e;transform:scaleX(0.9530)">быстрого доступа</span>
<span class="t" style="left:419.8px;top:240.9px;font-size:12px;line-height:14px;color:#9292a3;transform:scaleX(0.9779)">Копировать</span>
<span class="t" style="left:488.7px;top:240.9px;font-size:12px;line-height:14px;color:#9292a3;transform:scaleX(0.8904)">Вставить</span>
<span class="t" style="left:559.3px;top:207.1px;font-size:12px;line-height:14px;color:#9292a3;transform:scaleX(0.9105)">Вырезать</span>
<span class="t" style="left:559.3px;top:229.0px;font-size:12px;line-height:14px;color:#9292a3;transform:scaleX(0.9742)">Скопировать путь</span>
<span class="t" style="left:559.3px;top:250.9px;font-size:12px;line-height:14px;color:#9292a3;transform:scaleX(0.9278)">Вставить ярлык</span>
<span class="t" style="left:440.3px;top:273.7px;font-size:12px;line-height:14px;color:#5d5d69;transform:scaleX(0.9381)">Буфер обмена</span>
<span class="t" style="left:673.2px;top:240.9px;font-size:12px;line-height:14px;color:#9292a3;transform:scaleX(0.9289)">Переместить</span>
<span class="t" style="left:701.0px;top:254.0px;font-size:12px;line-height:14px;color:#9292a3;transform:scaleX(0.9412)">в</span>
<span class="t" style="left:747.4px;top:240.9px;font-size:12px;line-height:14px;color:#9292a3;transform:scaleX(0.9841)">Копировать</span>
<span class="t" style="left:772.7px;top:254.0px;font-size:12px;line-height:14px;color:#9292a3;transform:scaleX(0.9412)">в</span>
<span class="t" style="left:779.2px;top:273.7px;font-size:12px;line-height:14px;color:#5d5d69;transform:scaleX(0.9927)">Упорядочить</span>
<span class="t" style="left:824.2px;top:240.9px;font-size:12px;line-height:14px;color:#2a2a2e;transform:scaleX(0.9077)">Удалить</span>
<span class="t" style="left:871.5px;top:240.9px;font-size:12px;line-height:14px;color:#9292a3;transform:scaleX(0.9615)">Переименовать</span>
<span class="t" style="left:974.3px;top:240.9px;font-size:12px;line-height:14px;color:#2a2a2e;transform:scaleX(0.9320)">Новая</span>
<span class="t" style="left:974.3px;top:254.0px;font-size:12px;line-height:14px;color:#2a2a2e;transform:scaleX(0.9824)">папка</span>
<span class="t" style="left:985.4px;top:273.7px;font-size:12px;line-height:14px;color:#5d5d69;transform:scaleX(0.9121)">Создать</span>
<span class="t" style="left:1055.8px;top:240.9px;font-size:12px;line-height:14px;color:#2a2a2e;transform:scaleX(0.9051)">Свойства</span>
<span class="t" style="left:1129.4px;top:207.1px;font-size:12px;line-height:14px;color:#9292a3;transform:scaleX(0.9610)">Открыть</span>
<span class="t" style="left:1129.4px;top:229.0px;font-size:12px;line-height:14px;color:#9292a3;transform:scaleX(0.9494)">Изменить</span>
<span class="t" style="left:1128.9px;top:250.9px;font-size:12px;line-height:14px;color:#2a2a2e;transform:scaleX(0.9498)">Журнал</span>
<span class="t" style="left:1098.4px;top:273.7px;font-size:12px;line-height:14px;color:#5d5d69;transform:scaleX(0.9673)">Открыть</span>
<span class="t" style="left:1222.4px;top:207.1px;font-size:12px;line-height:14px;color:#2a2a2e;transform:scaleX(0.8942)">Выделить все</span>
<span class="t" style="left:1222.4px;top:229.0px;font-size:12px;line-height:14px;color:#2a2a2e;transform:scaleX(0.9247)">Снять выделение</span>
<span class="t" style="left:1222.4px;top:250.9px;font-size:12px;line-height:14px;color:#2a2a2e;transform:scaleX(0.9474)">Обратить выделение</span>
<span class="t" style="left:1244.1px;top:273.7px;font-size:12px;line-height:14px;color:#5d5d69;transform:scaleX(0.8996)">Выделить</span>
<span class="t" style="left:438.0px;top:300.5px;font-size:12px;line-height:14px;color:#1c1c1c;transform:scaleX(0.9974)">Этот компьютер</span>
<span class="t" style="left:551.4px;top:300.5px;font-size:12px;line-height:14px;color:#1c1c1c;transform:scaleX(0.9970)">Рабочий стол</span>
<span class="t" style="left:650.1px;top:300.5px;font-size:12px;line-height:14px;color:#1c1c1c;transform:scaleX(0.9501)">удалить</span>
<span class="t" style="left:715.9px;top:300.5px;font-size:12px;line-height:14px;color:#1c1c1c;transform:scaleX(1.0511)">Урок</span>
<span class="t" style="left:922.7px;top:300.5px;font-size:12px;line-height:14px;color:#7a7a84;transform:scaleX(1.0118)">Поиск в: Урок</span>
<span class="t" style="left:468.4px;top:331.9px;font-size:12px;line-height:14px;color:#888894;transform:scaleX(0.9882)">Имя</span>
<span class="t" style="left:729.1px;top:331.9px;font-size:12px;line-height:14px;color:#6c7080;transform:scaleX(0.9670)">Дата изменения</span>
<span class="t" style="left:873.4px;top:331.9px;font-size:12px;line-height:14px;color:#6c7080;transform:scaleX(0.9593)">Тип</span>
<span class="t" style="left:993.5px;top:331.9px;font-size:12px;line-height:14px;color:#6c7080;transform:scaleX(0.9552)">Размер</span>
<span class="t" style="left:306.2px;top:713.5px;font-size:12px;line-height:14px;color:#404046;transform:scaleX(0.9532)">Элементов: 6</span>
<span class="t" style="left:488.8px;top:360.5px;font-size:12px;line-height:14px;color:#1e1e22;transform:scaleX(0.9955)">Lubuntu1804ClubProfi</span>
<span class="t" style="left:729.1px;top:360.5px;font-size:12px;line-height:14px;color:#6b6b72;transform:scaleX(0.8917)">15.02.2024 23:25</span>
<span class="t" style="left:873.4px;top:360.5px;font-size:12px;line-height:14px;color:#6b6b72;transform:scaleX(0.9763)">Папка с файлами</span>
<span class="t" style="left:488.8px;top:381.6px;font-size:12px;line-height:14px;color:#1e1e22;transform:scaleX(1.0069)">Xubuntu-ClubProfi-110224</span>
<span class="t" style="left:729.1px;top:381.6px;font-size:12px;line-height:14px;color:#6b6b72;transform:scaleX(0.8917)">15.02.2024 23:25</span>
<span class="t" style="left:873.4px;top:381.6px;font-size:12px;line-height:14px;color:#6b6b72;transform:scaleX(0.9763)">Папка с файлами</span>
<span class="t" style="left:488.8px;top:402.7px;font-size:12px;line-height:14px;color:#1e1e22;transform:scaleX(1.0086)">Программы для флешек</span>
<span class="t" style="left:729.1px;top:402.7px;font-size:12px;line-height:14px;color:#6b6b72;transform:scaleX(0.8917)">15.02.2024 23:13</span>
<span class="t" style="left:873.4px;top:402.7px;font-size:12px;line-height:14px;color:#6b6b72;transform:scaleX(0.9763)">Папка с файлами</span>
<span class="t" style="left:488.8px;top:423.8px;font-size:12px;line-height:14px;color:#1e1e22;transform:scaleX(0.9891)">Lubuntu1804ClubProfi.zip</span>
<span class="t" style="left:729.1px;top:423.8px;font-size:12px;line-height:14px;color:#6b6b72;transform:scaleX(0.8917)">15.02.2024 23:18</span>
<span class="t" style="left:873.4px;top:423.8px;font-size:12px;line-height:14px;color:#6b6b72;transform:scaleX(0.9995)">zip Archive</span>
<span class="t" style="left:1036.6px;top:423.8px;font-size:12px;line-height:14px;color:#6b6b72;transform:scaleX(0.8804)">1 КБ</span>
<span class="t" style="left:488.8px;top:445.0px;font-size:12px;line-height:14px;color:#1e1e22;transform:scaleX(0.9982)">Xubuntu-ClubProfi-110224.zip</span>
<span class="t" style="left:729.1px;top:445.0px;font-size:12px;line-height:14px;color:#6b6b72;transform:scaleX(0.8917)">15.02.2024 23:18</span>
<span class="t" style="left:873.4px;top:445.0px;font-size:12px;line-height:14px;color:#6b6b72;transform:scaleX(0.9995)">zip Archive</span>
<span class="t" style="left:1036.6px;top:445.0px;font-size:12px;line-height:14px;color:#6b6b72;transform:scaleX(0.8804)">1 КБ</span>
<span class="t" style="left:488.8px;top:466.0px;font-size:12px;line-height:14px;color:#1e1e22;transform:scaleX(1.0012)">Программы для флешек.zip</span>
<span class="t" style="left:729.1px;top:466.0px;font-size:12px;line-height:14px;color:#6b6b72;transform:scaleX(0.8917)">15.02.2024 23:06</span>
<span class="t" style="left:873.4px;top:466.0px;font-size:12px;line-height:14px;color:#6b6b72;transform:scaleX(0.9995)">zip Archive</span>
<span class="t" style="left:1003.7px;top:466.0px;font-size:12px;line-height:14px;color:#6b6b72;transform:scaleX(0.8899)">152 135 КБ</span>
<span class="t" style="left:337.0px;top:674.5px;font-size:12px;line-height:14px;color:#1e1e22;transform:scaleX(0.9952)">Этот компьютер</span>
<span class="t" style="left:1771.7px;top:1053.3px;font-size:12px;line-height:14px;color:#f2f2f2;transform:scaleX(0.8456)">ENG</span>
<span class="t" style="left:1819.7px;top:1043.7px;font-size:12px;line-height:14px;color:#f2f2f2;transform:scaleX(0.8857)">23:31</span>
<span class="t" style="left:1808.0px;top:1063.3px;font-size:12px;line-height:14px;color:#f2f2f2;transform:scaleX(0.8791)">15.02.2024</span>
<svg class="a" style="left:1168px;top:510px" width="22" height="33" viewBox="0 0 22 33" ><path d="M1.4 1.1 V27.5 L7.9 22.2 L12.1 30.5 L15.6 28.4 L11.6 20.3 H19.7 Z" fill="#fff" stroke="#111" stroke-width="1.15" stroke-linejoin="round"/></svg>
</body></html>
